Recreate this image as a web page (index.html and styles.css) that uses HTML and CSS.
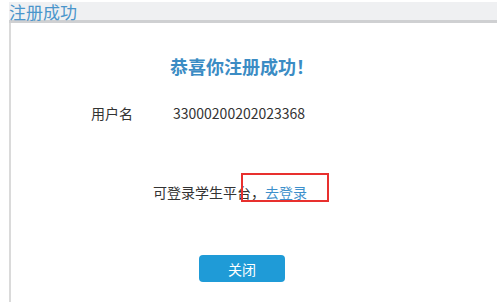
FILE: index.html
```html
<!DOCTYPE html>
<html lang="zh-CN">
<head>
<meta charset="utf-8">
<title>注册成功</title>
<link rel="stylesheet" href="styles.css">
</head>
<body>
  <div class="header"><span class="header-title">注册成功</span></div>
  <div class="panel">
    <div class="content">
      <h1 class="heading">恭喜你注册成功！</h1>
      <div class="row">
        <span class="label">用户名</span>
        <span class="value">33000200202023368</span>
      </div>
      <div class="login-line">
        可登录学生平台，<a class="login-link" href="#">去登录</a>
        <span class="mark-box"></span>
      </div>
      <div class="actions">
        <button class="btn-close" type="button">关闭</button>
      </div>
    </div>
  </div>
</body>
</html>
```

FILE: styles.css
```css
html, body {
  height: 100%;
}
body {
  margin: 0 0 0 9px;
  font-family: "Noto Sans CJK SC", "Microsoft YaHei", sans-serif;
  background: #ffffff;
  color: #333333;
  display: flex;
  flex-direction: column;
}
.header {
  margin-top: 2px;
  height: 18px;
  background: #eff0f2;
  border-bottom: 3px solid #cfd0d2;
  flex: none;
}
.header-title {
  display: block;
  padding-top: 1.4px;
  font-size: 17px;
  line-height: 18px;
  color: #4a95cb;
  white-space: nowrap;
}
.panel {
  flex: 1;
  border-left: 2px solid #dadada;
}
.content {
  width: 462px;
  padding-top: 34px;
}
.heading {
  margin: 0;
  font-size: 18px;
  line-height: 18px;
  font-weight: bold;
  color: #3b8cc4;
  text-align: center;
}
.row {
  margin-top: 31px;
  padding-left: 80px;
  display: flex;
  font-size: 14px;
  line-height: 14px;
  color: #333333;
}
.label {
  width: 82px;
}
.login-line {
  position: relative;
  margin-top: 65px;
  padding-left: 142px;
  font-size: 14px;
  line-height: 14px;
  color: #333333;
}
.login-link {
  color: #3d8fcb;
  text-decoration: none;
}
.mark-box {
  position: absolute;
  left: 230px;
  top: -12px;
  width: 84px;
  height: 25px;
  border: 2px solid #e8302e;
}
.actions {
  margin-top: 56px;
  display: flex;
  justify-content: center;
}
.btn-close {
  width: 86px;
  height: 27px;
  border: none;
  border-radius: 4px;
  background: #1f9bd7;
  color: #ffffff;
  font-family: inherit;
  font-size: 14px;
  padding: 0;
}
```
